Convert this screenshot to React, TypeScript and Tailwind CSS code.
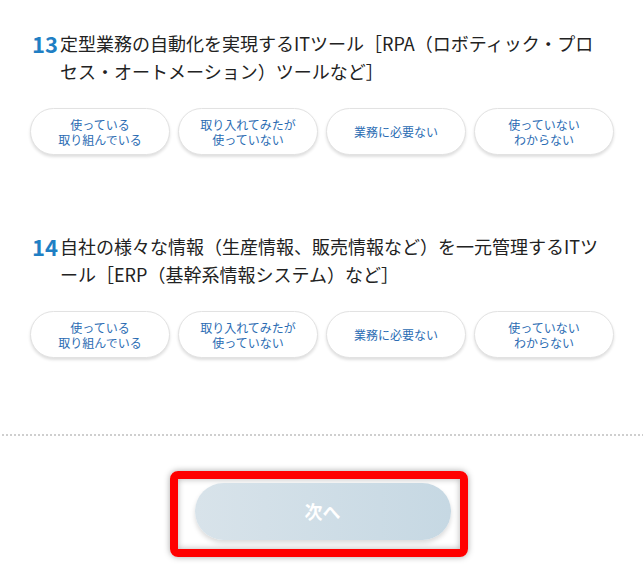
import React from "react";

const options = [
  ["使っている", "取り組んでいる"],
  ["取り入れてみたが", "使っていない"],
  ["業務に必要ない"],
  ["使っていない", "わからない"],
];

function Question({ num, lines }: { num: string; lines: string[] }) {
  return (
    <div>
      <div className="flex pl-[32px]">
        <div className="w-[28px] shrink-0 text-[22px] leading-[28px] font-bold text-[#1f7fc4]">{num}</div>
        <div className="text-[18px] leading-[28px] text-[#222222]">
          {lines.map((l, i) => (
            <div key={i} className="whitespace-nowrap">{l}</div>
          ))}
        </div>
      </div>
      <div className="mt-[23px] grid grid-cols-4 gap-2 pl-[30px] pr-[29px]">
        {options.map((o, i) => (
          <button
            key={i}
            className="h-[47px] rounded-full bg-white border border-[#e2e2e2] shadow-[0_2px_3px_rgba(0,0,0,0.13)] flex flex-col items-center justify-center text-[12px] leading-[15px] text-[#2b6cb3]"
          >
            {o.map((t, j) => (
              <span key={j}>{t}</span>
            ))}
          </button>
        ))}
      </div>
    </div>
  );
}

export default function App() {
  return (
    <div
      className="w-full min-h-[565px] bg-white pt-[29px]"
      style={{ fontFamily: '"Noto Sans CJK JP", "Noto Sans", sans-serif' }}
    >
      <Question
        num="13"
        lines={["定型業務の自動化を実現するITツール［RPA（ロボティック・プロ", "セス・オートメーション）ツールなど］"]}
      />
      <div className="mt-[77px]">
        <Question
          num="14"
          lines={["自社の様々な情報（生産情報、販売情報など）を一元管理するITツ", "ール［ERP（基幹系情報システム）など］"]}
        />
      </div>
      <div className="mt-[76px] ml-[2px] h-[2px] bg-[linear-gradient(to_right,#cfcfcf_50%,transparent_50%)] bg-[length:4px_2px]" />
      <div className="mt-[47px] flex justify-center">
        <div className="relative w-[256px] ml-[2px]">
          <div className="absolute left-[-25px] top-[-12px] right-[-17px] bottom-[-17px] rounded-[8px] border-[8px] border-[#ff0000] shadow-[0_0_6px_rgba(0,0,0,0.35),inset_0_0_6px_rgba(0,0,0,0.3)]" />
          <button className="relative w-[256px] h-[57px] rounded-full bg-gradient-to-r from-[#d8e3ea] to-[#c6d8e3] shadow-[0_3px_5px_rgba(0,0,0,0.15)] text-white text-[18px] font-bold">
            次へ
          </button>
        </div>
      </div>
    </div>
  );
}
